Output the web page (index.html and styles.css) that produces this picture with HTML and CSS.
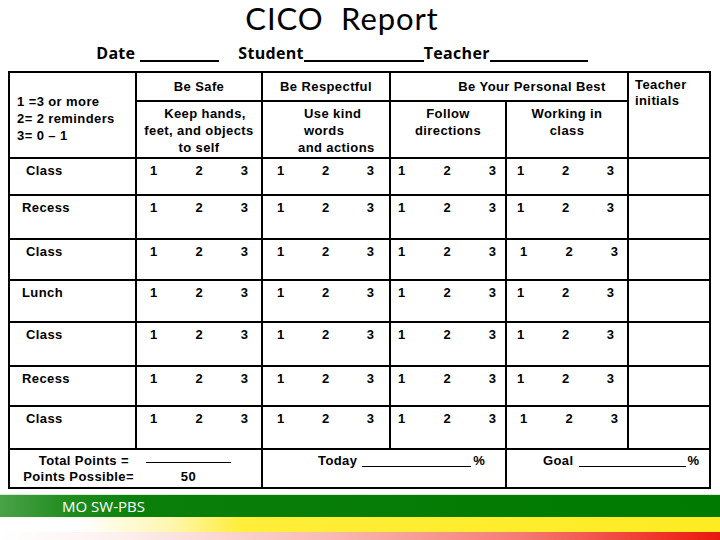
FILE: index.html
```html
<!DOCTYPE html>
<html lang="en">
<head>
<meta charset="utf-8">
<title>CICO Report</title>
<link rel="stylesheet" href="styles.css">
</head>
<body>
<div class="page">
  <header class="head">
    <h1 class="title">CICO&nbsp; Report</h1>
    <p class="fields">Date<span class="blank b-date"></span>Student<span class="blank b-student"></span>Teacher<span class="blank b-teacher"></span></p>
  </header>

  <table class="chart">
    <colgroup>
      <col class="c-label">
      <col class="c-safe">
      <col class="c-resp">
      <col class="c-follow">
      <col class="c-work">
      <col class="c-init">
    </colgroup>
    <thead>
      <tr class="h-top">
        <th rowspan="2" class="key">1 =3 or more<br>2= 2 reminders<br>3= 0 – 1</th>
        <th class="cat">Be Safe</th>
        <th class="cat">Be Respectful</th>
        <th colspan="2" class="cat best">Be Your Personal Best</th>
        <th rowspan="2" class="initials">Teacher<br>initials</th>
      </tr>
      <tr class="h-sub">
        <th class="sub keep">Keep hands,<br>feet, and objects<br>to self</th>
        <th class="sub kind">Use kind<br>words<br><span class="pull">and actions</span></th>
        <th class="sub">Follow<br>directions</th>
        <th class="sub">Working in<br>class</th>
      </tr>
    </thead>
    <tbody>
      <tr class="r37">
        <td class="label ind">Class</td>
        <td class="n safe"><div class="nums"><span>1</span><span>2</span><span>3</span></div></td>
        <td class="n resp"><div class="nums"><span>1</span><span>2</span><span>3</span></div></td>
        <td class="n follow"><div class="nums"><span>1</span><span>2</span><span>3</span></div></td>
        <td class="n work"><div class="nums"><span>1</span><span>2</span><span>3</span></div></td>
        <td></td>
      </tr>
      <tr class="r44">
        <td class="label">Recess</td>
        <td class="n safe"><div class="nums"><span>1</span><span>2</span><span>3</span></div></td>
        <td class="n resp"><div class="nums"><span>1</span><span>2</span><span>3</span></div></td>
        <td class="n follow"><div class="nums"><span>1</span><span>2</span><span>3</span></div></td>
        <td class="n work"><div class="nums"><span>1</span><span>2</span><span>3</span></div></td>
        <td></td>
      </tr>
      <tr class="r41">
        <td class="label ind">Class</td>
        <td class="n safe"><div class="nums"><span>1</span><span>2</span><span>3</span></div></td>
        <td class="n resp"><div class="nums"><span>1</span><span>2</span><span>3</span></div></td>
        <td class="n follow"><div class="nums"><span>1</span><span>2</span><span>3</span></div></td>
        <td class="n work shift"><div class="nums"><span>1</span><span>2</span><span>3</span></div></td>
        <td></td>
      </tr>
      <tr class="r42">
        <td class="label">Lunch</td>
        <td class="n safe"><div class="nums"><span>1</span><span>2</span><span>3</span></div></td>
        <td class="n resp"><div class="nums"><span>1</span><span>2</span><span>3</span></div></td>
        <td class="n follow"><div class="nums"><span>1</span><span>2</span><span>3</span></div></td>
        <td class="n work"><div class="nums"><span>1</span><span>2</span><span>3</span></div></td>
        <td></td>
      </tr>
      <tr class="r44">
        <td class="label ind">Class</td>
        <td class="n safe"><div class="nums"><span>1</span><span>2</span><span>3</span></div></td>
        <td class="n resp"><div class="nums"><span>1</span><span>2</span><span>3</span></div></td>
        <td class="n follow"><div class="nums"><span>1</span><span>2</span><span>3</span></div></td>
        <td class="n work"><div class="nums"><span>1</span><span>2</span><span>3</span></div></td>
        <td></td>
      </tr>
      <tr class="r40">
        <td class="label">Recess</td>
        <td class="n safe"><div class="nums"><span>1</span><span>2</span><span>3</span></div></td>
        <td class="n resp"><div class="nums"><span>1</span><span>2</span><span>3</span></div></td>
        <td class="n follow"><div class="nums"><span>1</span><span>2</span><span>3</span></div></td>
        <td class="n work"><div class="nums"><span>1</span><span>2</span><span>3</span></div></td>
        <td></td>
      </tr>
      <tr class="r43">
        <td class="label ind">Class</td>
        <td class="n safe"><div class="nums"><span>1</span><span>2</span><span>3</span></div></td>
        <td class="n resp"><div class="nums"><span>1</span><span>2</span><span>3</span></div></td>
        <td class="n follow"><div class="nums"><span>1</span><span>2</span><span>3</span></div></td>
        <td class="n work shift"><div class="nums"><span>1</span><span>2</span><span>3</span></div></td>
        <td></td>
      </tr>
    </tbody>
    <tfoot>
      <tr class="r39">
        <td colspan="2" class="tot">
          <div class="totgrid">
            <span class="tl">Total Points =</span><span class="tline"></span>
            <span class="tl2">Points Possible=</span><span class="fifty">50</span>
          </div>
        </td>
        <td colspan="2" class="pct today">Today<span class="pline pl-today"></span>%</td>
        <td colspan="2" class="pct goal">Goal<span class="pline pl-goal"></span>%</td>
      </tr>
    </tfoot>
  </table>

  <footer class="brand">
    <div class="bar-green">MO SW-PBS</div>
    <div class="bar-yellow"></div>
    <div class="bar-red"></div>
  </footer>
</div>
</body>
</html>
```

FILE: styles.css
```css
html, body {
  margin: 0;
  padding: 0;
  background: #fff;
  color: #000;
}

.page {
  width: 720px;
  height: 540px;
  overflow: hidden;
  display: flex;
  flex-direction: column;
}

/* ---------- heading ---------- */
.head {
  width: 684px;
  text-align: center;
}

.title {
  margin: 0;
  font: 400 31px/37px Lato, "Open Sans", sans-serif;
  letter-spacing: 0.9px;
  color: #000;
}

.fields {
  margin: 6px 0 0;
  font: 700 16px/20px "Open Sans", sans-serif;
  letter-spacing: 0.3px;
  white-space: nowrap;
}

.blank {
  display: inline-block;
  height: 0;
  border-bottom: 2px solid #000;
  vertical-align: -3px;
}
.b-date { width: 79px; margin: 0 19px 0 5px; }
.b-student { width: 120px; }
.b-teacher { width: 98px; }

/* ---------- chart ---------- */
.chart {
  margin: 8px 0 0 8px;
  width: 701px;
  table-layout: fixed;
  border-collapse: collapse;
  font: 700 13px/17px "Liberation Sans", Arial, sans-serif;
  letter-spacing: 0.4px;
}

.c-label { width: 127px; }
.c-safe { width: 126px; }
.c-resp { width: 128px; }
.c-follow { width: 116px; }
.c-work { width: 122px; }
.c-init { width: 82px; }

.chart th,
.chart td {
  border: 2px solid #000;
  padding: 0;
  font-weight: 700;
}

.chart .h-top { height: 29px; }
.chart .h-sub { height: 57px; }
.chart .r37 { height: 37px; }
.chart .r39 { height: 39px; }
.chart .r40 { height: 40px; }
.chart .r41 { height: 41px; }
.chart .r42 { height: 42px; }
.chart .r43 { height: 43px; }
.chart .r44 { height: 44px; }

.chart .key {
  text-align: left;
  vertical-align: middle;
  padding: 6px 0 0 7px;
}

.chart .cat {
  text-align: center;
  vertical-align: middle;
}
.chart .best { padding-left: 46px; }

.chart .initials {
  text-align: left;
  vertical-align: top;
  padding: 4px 0 0 6px;
  line-height: 16px;
}

.chart .sub {
  text-align: center;
  vertical-align: top;
  padding-top: 3px;
}
.chart .keep { text-indent: 12px; }
.chart .kind {
  text-align: left;
  padding-left: 41px;
}
.pull { margin-left: -6px; }

.chart .label {
  vertical-align: top;
  padding: 3px 0 0 12px;
}
.chart .label.ind { padding-left: 16px; }

.chart .n {
  vertical-align: top;
  padding-top: 3px;
}
.nums {
  display: flex;
  justify-content: space-between;
  letter-spacing: 0;
}
.chart .safe { padding-left: 13px; padding-right: 13px; }
.chart .resp { padding-left: 14px; padding-right: 15px; }
.chart .follow { padding-left: 7px; padding-right: 9px; }
.chart .work { padding-left: 10px; padding-right: 13px; }
.chart .work.shift { padding-left: 13px; padding-right: 9px; }

/* footer row */
.chart .tot {
  vertical-align: top;
  padding-top: 3px;
}
.totgrid {
  display: grid;
  grid-template-columns: 124px 85px;
  column-gap: 12px;
  line-height: 16px;
}
.tl, .tl2 { text-align: right; }
.tl { padding-right: 5px; }
.tline {
  align-self: start;
  height: 9px;
  border-bottom: 1.5px solid #000;
}
.fifty { text-align: center; }

.chart .pct {
  vertical-align: top;
  padding-top: 3px;
  line-height: 16px;
  white-space: nowrap;
}
.chart .today { padding-left: 55px; }
.chart .goal { padding-left: 36px; }

.pline {
  display: inline-block;
  height: 0;
  border-bottom: 1px solid #000;
  vertical-align: -2px;
  margin: 0 2px 0 5px;
}
.pl-today { width: 109px; }
.pl-goal { width: 107px; }

/* ---------- brand bars ---------- */
.brand {
  margin-top: auto;
  display: flex;
  flex-direction: column;
}

.bar-green {
  height: 22px;
  padding-left: 62px;
  font: 400 15px/22px "Open Sans", sans-serif;
  color: #fff;
  background: linear-gradient(to right, #4aa247 0, #1f8c1d 70px, #0a7f0a 140px, #007a00 100%);
  border-top: 1px solid #d6ecd2;
}

.bar-yellow {
  height: 15px;
  background: linear-gradient(to right, #ffffff 0, #ffffff 80px, #fff6b0 170px, #ffee3a 240px, #ffeb22 100%);
}

.bar-red {
  height: 8px;
  background: linear-gradient(to right, #ffffff 0, #fdf0ef 120px, #f9b9b4 330px, #f47b74 520px, #ef2a20 680px, #e81810 100%);
}
```
